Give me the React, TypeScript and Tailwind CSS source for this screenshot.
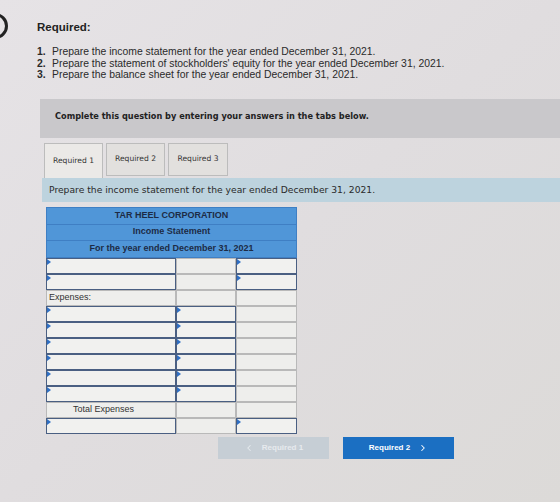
import { ChevronLeft, ChevronRight } from "lucide-react";

type Cell = "in" | "none" | string;

// each row: [account, amount, total]
const rows: Cell[][] = [
  ["in", "none", "in"],
  ["in", "none", "in"],
  ["Expenses:", "none", "none"],
  ["in", "in", "none"],
  ["in", "in", "none"],
  ["in", "in", "none"],
  ["in", "in", "none"],
  ["in", "in", "none"],
  ["in", "in", "none"],
  ["Total Expenses", "none", "none"],
  ["in", "none", "in"],
];

function InputCell() {
  return (
    <div className="relative h-full border-[1.5px] border-[#4a5f82] bg-[#f1f1ef]">
      <span className="absolute left-0 top-0 h-0 w-0 border-y-[3px] border-l-[4px] border-y-transparent border-l-[#2f6fc4]" />
    </div>
  );
}

function TableCell({ value, indent }: { value: Cell; indent?: boolean }) {
  if (value === "in") return <InputCell />;
  return (
    <div
      className={`flex h-full items-center border border-[#b9b9b9] bg-[#eeeeec] text-[9px] text-[#333] ${
        indent ? "pl-[26px]" : "pl-[2px]"
      }`}
    >
      {value === "none" ? "" : value}
    </div>
  );
}

export default function App() {
  return (
    <div
      className="relative h-[502px] w-[560px] overflow-hidden bg-gradient-to-br from-[#e6e3e6] via-[#e0dddf] to-[#dcdad8] text-[#222]"
      style={{ fontFamily: '"Liberation Sans", Arial, sans-serif' }}
    >
      {/* clipped circle on the left edge */}
      <div className="absolute left-[-18px] top-[13px] h-[26px] w-[26px] rounded-full border-[3px] border-[#222]" />

      <div className="pl-[37px] pt-[20px]">
        <h2 className="text-[11.5px] font-bold leading-[14px]">Required:</h2>
        <ol className="mt-[12px] text-[10.4px] leading-[11.5px] text-[#2a2a2a]">
          <li className="flex">
            <span className="w-[15px] font-bold">1.</span>
            Prepare the income statement for the year ended December 31, 2021.
          </li>
          <li className="flex">
            <span className="w-[15px] font-bold">2.</span>
            Prepare the statement of stockholders' equity for the year ended December 31, 2021.
          </li>
          <li className="flex">
            <span className="w-[15px] font-bold">3.</span>
            Prepare the balance sheet for the year ended December 31, 2021.
          </li>
        </ol>
      </div>

      <div
        className="ml-[40px] mt-[18px]"
        style={{ fontFamily: '"DejaVu Sans", Verdana, sans-serif' }}
      >
        <div className="h-[39px] bg-[#c9c8cb] pl-[15px] pt-[11px] text-[8.2px] font-bold text-[#222]">
          Complete this question by entering your answers in the tabs below.
        </div>

        {/* tabs */}
        <div className="ml-[4px] mt-[5px] flex h-[35px] items-start gap-[3px]">
          <div className="flex h-[35px] w-[59px] items-center justify-center border border-b-0 border-[#bcbcbc] bg-[#ebe9e7] text-[7.6px] text-[#333]">
            Required 1
          </div>
          <div className="flex h-[33px] w-[59px] items-center justify-center border border-[#bcbcbc] bg-[#e2e0de] text-[7.6px] text-[#333]">
            Required 2
          </div>
          <div className="flex h-[33px] w-[60px] items-center justify-center border border-[#bcbcbc] bg-[#e2e0de] text-[7.6px] text-[#333]">
            Required 3
          </div>
        </div>

        <div className="ml-[2px] flex h-[24px] items-center bg-[#bdd3de] pl-[7px] text-[9.2px] text-[#2a2a2a]">
          Prepare the income statement for the year ended December 31, 2021.
        </div>
      </div>

      {/* income statement */}
      <div className="ml-[46px] mt-[5px] w-[251px]">
        <div className="border border-[#3f7fc4] bg-[#5096d8] text-center text-[9px] font-bold text-[#1d2b45]">
          <div className="flex h-[17px] items-center justify-center border-b border-[#3f7fc4]">
            TAR HEEL CORPORATION
          </div>
          <div className="flex h-[16px] items-center justify-center border-b border-[#3f7fc4]">
            Income Statement
          </div>
          <div className="flex h-[16px] items-center justify-center">
            For the year ended December 31, 2021
          </div>
        </div>
        <div className="grid grid-cols-[130px_60px_61px] auto-rows-[16px]">
          {rows.map((row, r) =>
            row.map((value, c) => (
              <TableCell
                key={`${r}-${c}`}
                value={value}
                indent={value === "Total Expenses"}
              />
            ))
          )}
        </div>
      </div>

      <div className="ml-[218px] mt-[3px] flex gap-[14px]">
        <button className="flex h-[22px] w-[111px] items-center justify-center gap-[8px] bg-[#c6ced5] text-[8px] font-bold text-[#e6eaee]">
          <ChevronLeft size={10} strokeWidth={2.5} />
          Required 1
        </button>
        <button className="flex h-[22px] w-[111px] items-center justify-center gap-[8px] bg-[#1b6fc2] text-[8px] font-bold text-white">
          Required 2
          <ChevronRight size={10} strokeWidth={2.5} />
        </button>
      </div>
    </div>
  );
}
